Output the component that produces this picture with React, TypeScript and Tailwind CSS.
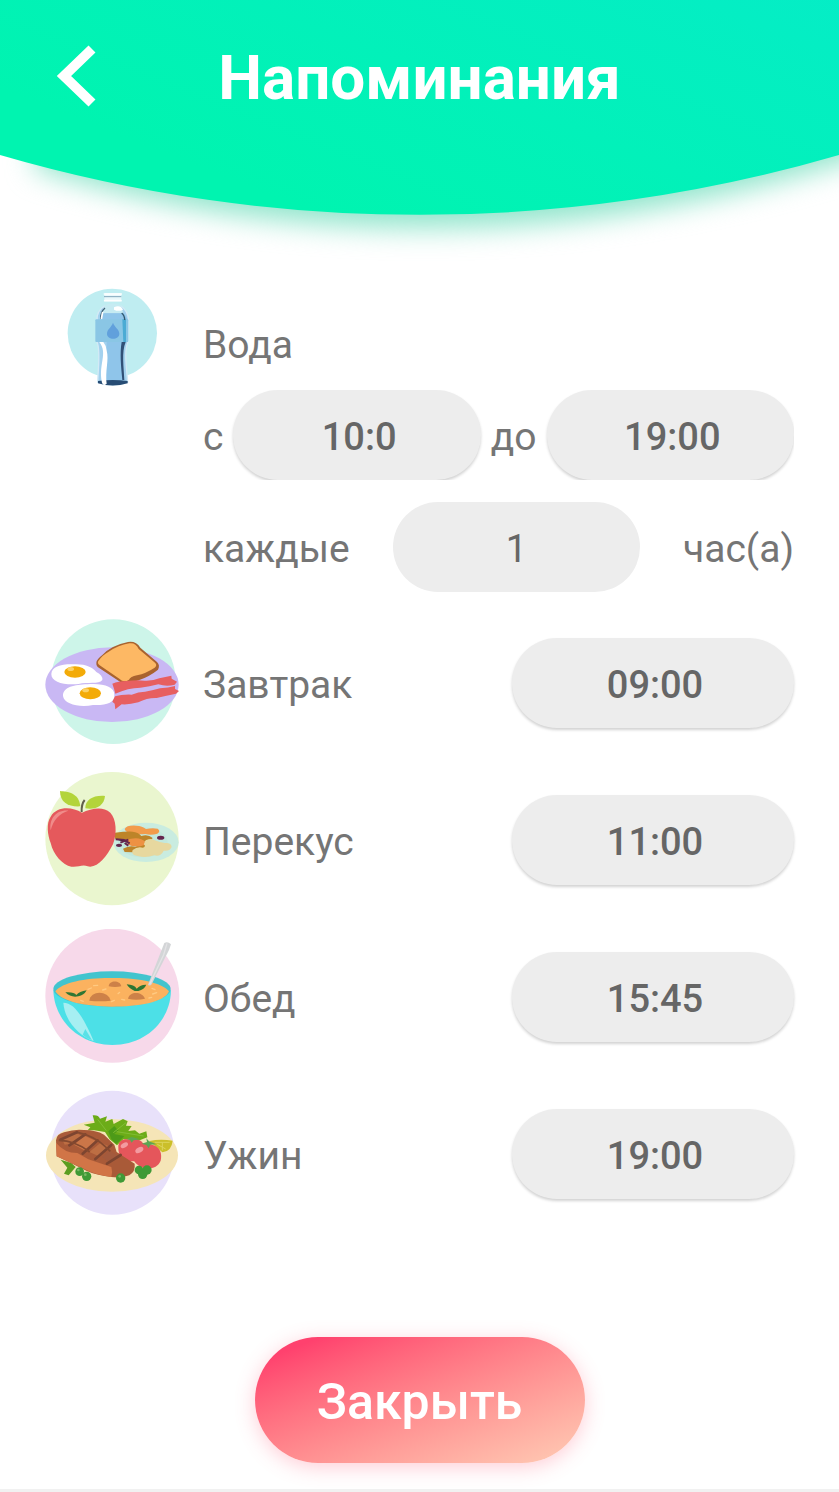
import React, { useState } from 'react'

interface Meal {
  id: string
  title: string
  time: string
  icon: React.ReactNode
}

const WaterIcon = () => (
  <svg viewBox="15 0 405 405" className="w-[135px] shrink-0 self-start" aria-hidden="true">
    <circle cx="217" cy="190" r="134" fill="#bfedf1" />
    <path
      d="M193 108 C174 120 170 137 171 152 L171 216 C182 240 175 286 173 337 Q218 354 263 337 C259 286 252 244 264 216 L266 152 C265 133 259 119 243 108 Z"
      fill="#a3d1ee"
      stroke="#d3eaf6"
      strokeWidth="4"
    />
    <path d="M193 106 Q218 95 243 106 L250 130 L186 130 Z" fill="#c6ebf2" />
    <path d="M184 130 L252 130 L264 150 L264 216 L252 216 C240 244 246 298 249 332 L200 332 L200 216 L171 216 L171 150 L184 148 Z" fill="#8fc5ea" />
    <rect x="166" y="148" width="99" height="68" rx="3" fill="#8ac6e5" />
    <path d="M247 148 H258 V216 H250 Z" fill="#4cabd4" />
    <rect x="193" y="70" width="51" height="24" rx="4" fill="#e9f8fb" />
    <path d="M193 72 H244 M194 92 H243" stroke="#fff" strokeWidth="5" strokeLinecap="round" />
    <path d="M192 80 H244" stroke="#81a6bb" strokeWidth="3" />
    <path d="M195 114 Q181 126 182 147" fill="none" stroke="#426174" strokeWidth="4" />
    <path d="M188 126 L184 147" stroke="#fff" strokeWidth="5" />
    <path d="M222 112 Q240 103 249 119 Q236 126 222 119 Z" fill="#fff" />
    <path d="M245 129 Q254 136 254 150" fill="none" stroke="#31576e" strokeWidth="4" />
    <path d="M219 158 C214 172 201 178 201 191 C201 211 238 211 238 191 C238 178 224 172 219 158 Z" fill="#61a0dc" />
    <path d="M174 333 Q218 327 263 333 L263 340 Q218 353 174 340 Z" fill="#274c74" />
    <path d="M178 216 C205 252 174 282 186 338 Q190 351 200 341 C194 304 208 270 200 242 Q198 225 190 216 Z" fill="#fff" />
    <path d="M245 216 H257 C244 247 252 292 253 330 L247 330 C243 288 239 250 245 216 Z" fill="#315076" />
  </svg>
)

const BreakfastIcon = () => (
  <svg viewBox="30 30 405 405" className="w-[135px] shrink-0" aria-hidden="true">
    <circle cx="235" cy="230" r="187" fill="#cdf5e9" />
    <ellipse cx="231" cy="239" rx="200" ry="112" fill="#c9b8f4" />
    <path
      d="M184 173 Q184 164 202 150 Q229 121 279 111 Q303 107 316 128 L366 171 Q376 181 369 194 Q344 214 313 225 Q289 235 268 234 Q255 233 247 225 L188 186 Q183 181 184 173 Z"
      fill="#a9632f"
    />
    <path
      d="M190 168 Q201 151 221 140 Q250 121 283 115 Q302 112 311 132 L360 173 Q368 181 359 188 Q333 205 306 211 Q286 215 282 224 Q267 235 253 221 L194 181 Q186 175 190 168 Z"
      fill="#fdb864"
    />
    <path
      d="M49 207 C50 184 79 177 115 178 C151 176 171 186 184 201 Q204 211 202 225 C191 239 157 230 131 237 C88 241 48 232 49 207 Z"
      fill="#fff"
    />
    <path
      d="M84 273 C84 246 119 239 157 238 C203 234 239 245 238 269 C242 294 210 302 174 300 C134 309 87 297 84 273 Z"
      fill="#fff"
    />
    <ellipse cx="120" cy="201" rx="32" ry="17" fill="#f3ab08" />
    <ellipse cx="166" cy="265" rx="32" ry="18" fill="#f3ab08" />
    <ellipse cx="107" cy="192" rx="10" ry="6" fill="#fbd266" />
    <ellipse cx="152" cy="256" rx="10" ry="6" fill="#fbd266" />
    <path
      d="M232 236 Q250 228 275 228 Q306 224 329 227 Q355 228 373 220 Q391 216 409 212 L410 221 L426 230 L419 239 Q395 246 370 238 Q344 245 316 248 Q279 248 241 266 L237 251 Z"
      fill="#e75f60"
    />
    <path
      d="M232 290 L240 274 Q260 268 290 269 Q310 260 330 260 Q357 255 375 250 Q400 249 420 243 L420 252 L432 258 L423 266 Q393 272 365 279 Q337 278 310 292 Q281 300 260 298 L241 313 L239 296 Z"
      fill="#e75f60"
    />
  </svg>
)

const SnackIcon = () => (
  <svg viewBox="30 36 405 405" className="w-[135px] shrink-0" aria-hidden="true">
    <circle cx="231" cy="236" r="200" fill="#eaf6cf" />
    <ellipse cx="333" cy="247" rx="98" ry="59" fill="#c9ece0" />
    <ellipse cx="323" cy="247" rx="75" ry="45" fill="#c2e8dd" />
    <path d="M269 207 Q275 195 304 197 Q322 198 333 207 Q352 203 368 206 Q378 214 367 221 Q348 227 331 222 Q306 224 292 220 Q272 219 269 207 Z" fill="#f29b4b" />
    <path d="M240 218 Q272 214 293 215 Q309 216 319 228 Q339 221 353 234 Q345 249 321 242 Q305 248 281 241 L240 236 Z" fill="#bd8429" />
    <path d="M264 266 Q282 255 301 260 Q320 251 336 257 L330 268 Q308 267 293 277 L269 276 Z" fill="#bd8429" />
    <path d="M271 241 Q302 230 319 238 Q340 246 326 256 Q304 264 280 254 Z" fill="#ed9143" />
    <path d="M242 238 L267 240 L284 250 M256 248 L280 239 M269 249 L280 257" stroke="#64264e" strokeWidth="6" />
    <ellipse cx="252" cy="256" rx="9" ry="5" fill="#64264e" />
    <ellipse cx="377" cy="233" rx="11" ry="6" fill="#64264e" />
    <path d="M332 241 Q349 234 357 240 Q376 247 389 249 Q409 247 410 261 Q403 275 386 272 Q377 291 358 286 Q332 295 308 288 Q286 285 293 270 Q307 259 323 263 Q334 260 327 251 Z" fill="#e7d89f" />
    <path
      d="M141 158 C109 139 65 139 47 170 C33 190 38 225 47 249 C55 285 83 315 109 320 C128 323 142 312 158 319 C187 326 214 292 234 253 C247 219 244 177 226 158 C203 137 168 146 141 158 Z"
      fill="#e5595c"
    />
    <path d="M47 211 C42 178 62 149 100 152 C73 160 55 180 47 211 Z" fill="#f08c8a" />
    <path d="M75 93 C98 95 132 98 136 139 C101 141 75 128 75 93 Z" fill="#b3d43a" />
    <path d="M210 108 C175 105 150 120 151 145 C181 150 207 139 210 108 Z" fill="#b3d43a" />
    <path d="M140 156 Q139 132 149 120" fill="none" stroke="#61604b" strokeWidth="6" />
  </svg>
)

const LunchIcon = () => (
  <svg viewBox="30 42 405 405" className="w-[135px] shrink-0" aria-hidden="true">
    <circle cx="232" cy="242" r="201" fill="#f7d9ea" />
    <path d="M55 226 C58 320 137 390 232 390 C330 390 406 320 408 226 Z" fill="#4ce0e7" />
    <ellipse cx="231" cy="222" rx="176" ry="53" fill="#42c4ce" />
    <path d="M61 229 C81 202 155 188 231 189 C312 188 381 203 402 229 C389 263 308 275 231 275 C153 274 82 262 61 229 Z" fill="#fbb25f" />
    <path d="M85 263 C117 263 143 302 176 378 C133 364 89 318 85 263 Z" fill="#a6eff2" />
    <path d="M143 359 Q154 370 171 376 L151 342 Z" fill="#5ae1e7" />
    <path d="M163 257 C166 225 220 225 227 257 Q195 261 163 257 Z" fill="#cd8148" />
    <path d="M221 214 C222 195 256 195 259 214 Q240 218 221 214 Z" fill="#cd8148" />
    <path d="M279 251 C283 228 322 228 330 251 Q303 257 279 251 Z" fill="#cd8148" />
    <path d="M91 232 Q117 230 124 240 Q133 229 155 226 Q147 241 130 244 Q108 249 91 232 Z" fill="#2f7633" />
    <path d="M275 208 Q298 209 305 221 Q317 208 334 209 Q328 223 310 228 L299 228 Q282 220 275 208 Z" fill="#2f7633" />
    <g stroke="#ffca82" strokeWidth="4" strokeLinecap="round">
      <path d="M159 223 L169 219 M176 212 L188 211 M203 225 L213 222 M229 260 L238 256 M249 236 L254 232" />
      <path d="M260 253 L269 255 M351 220 L360 224 M342 249 L350 247 M137 256 L145 259 M353 237 L365 233" />
    </g>
    <path d="M388 84 Q398 78 408 88 L402 105 L350 208 Q344 215 339 209 Z" fill="#d3d5d7" />
    <path d="M396 85 L386 119 L344 208" fill="none" stroke="#e3e3e5" strokeWidth="4" />
  </svg>
)

const DinnerIcon = () => (
  <svg viewBox="30 18 405 405" className="w-[135px] shrink-0" aria-hidden="true">
    <circle cx="232" cy="218" r="186" fill="#e8e1fa" />
    <ellipse cx="231" cy="226" rx="198" ry="109" fill="#f5e5b7" />
    <path d="M343 183 Q375 176 413 182 Q410 214 382 217 Z" fill="#cbbf2a" />
    <path d="M359 187 L404 187 M382 188 L382 211 M367 193 L392 207" stroke="#ddd55d" strokeWidth="3" />
    <path
      d="M146 134 L179 128 L173 106 Q190 104 195 116 L216 109 L211 125 L232 117 L236 132 L264 117 L278 124 L273 137 L290 138 L280 153 L300 151 L313 161 L334 154 L337 172 L314 181 L265 178 L246 196 L224 178 L210 156 L178 151 L158 151 L166 142 Z"
      fill="#6cac18"
    />
    <path d="M220 154 L238 138 L250 152 L237 162 L268 168 L244 192 L229 178 Z" fill="#4d9a18" />
    <path d="M188 118 L214 152 M235 158 L273 128 M245 155 L326 168" stroke="#82bd35" strokeWidth="3" />
    <path d="M77 239 L109 249 L122 261 L101 286 L87 281 L97 263 Z" fill="#5b9d20" />
    <path d="M250 202 C249 180 269 174 289 180 C319 172 333 192 330 218 C318 247 281 252 259 232 Q249 221 250 202 Z" fill="#e5565b" />
    <path d="M294 224 C298 193 329 184 350 194 C376 198 382 222 377 242 C366 270 325 273 304 251 Q292 240 294 224 Z" fill="#e5565b" />
    <ellipse cx="268" cy="196" rx="12" ry="7" fill="#f39aa0" transform="rotate(-30 268 196)" />
    <ellipse cx="313" cy="210" rx="13" ry="8" fill="#f39aa0" transform="rotate(-30 313 210)" />
    <path d="M275 177 L290 171 L315 178 L296 181 L290 188 L285 180 Z" fill="#5ca553" />
    <path d="M320 191 L336 186 L334 175 L342 184 L365 193 L346 194 L341 205 L334 195 Z" fill="#5ca553" />
    <path d="M63 181 Q65 162 87 157 Q120 146 147 150 Q183 150 207 164 L238 194 L245 216 L299 251 Q302 274 283 286 Q261 295 229 291 Q188 287 157 274 L103 247 L65 229 Z" fill="#a95a38" />
    <path d="M63 188 Q88 219 127 219 L160 238 L229 261 Q234 277 229 291 Q184 286 148 267 L65 229 Z" fill="#d17547" />
    <path d="M82 179 L105 162 Q129 158 139 167 L115 189 L89 194 Z" fill="#bd6e43" />
    <path d="M117 194 L149 167 L183 183 L148 211 Z" fill="#cb7648" />
    <path d="M163 216 L197 188 L225 200 L190 228 Z" fill="#bd6e43" />
    <path d="M201 231 L223 210 L250 229 L225 250 Z" fill="#a35a3d" />
    <path d="M76 179 L126 157 M103 196 L151 163 M143 221 L188 181 M181 237 L229 195 M216 251 L257 225" stroke="#7d4530" strokeWidth="8" strokeLinecap="round" />
    <path d="M71 181 Q120 181 164 216 M128 157 Q180 169 211 200 L226 214" fill="none" stroke="#84492f" strokeWidth="5" />
    <g fill="#3f9a36">
      <circle cx="134" cy="275" r="13" />
      <circle cx="155" cy="289" r="14" />
      <circle cx="257" cy="294" r="14" />
      <circle cx="312" cy="270" r="13" />
      <circle cx="336" cy="270" r="14" />
      <circle cx="323" cy="283" r="14" />
    </g>
    <g fill="#78b866">
      <circle cx="130" cy="270" r="4" />
      <circle cx="151" cy="284" r="4" />
      <circle cx="254" cy="289" r="4" />
    </g>
  </svg>
)

const meals: Meal[] = [
  { id: 'breakfast', title: 'Завтрак', time: '09:00', icon: <BreakfastIcon /> },
  { id: 'snack', title: 'Перекус', time: '11:00', icon: <SnackIcon /> },
  { id: 'lunch', title: 'Обед', time: '15:45', icon: <LunchIcon /> },
  { id: 'dinner', title: 'Ужин', time: '19:00', icon: <DinnerIcon /> },
]

interface TimeButtonProps {
  id: string
  time: string
  className: string
}

const TimeButton: React.FC<TimeButtonProps> = ({ id, time, className }) => (
  <button
    id={id}
    type="button"
    className={`h-[90px] rounded-full bg-[#ededed] pt-1 pl-1 text-center text-[38px] font-medium text-[#666666] shadow-[0_2px_3px_rgba(0,0,0,0.18)] ${className}`}
  >
    {time}
  </button>
)

// Curved header background with a soft glow under the arc
const HeaderCurve = () => (
  <svg
    viewBox="0 0 839 215"
    preserveAspectRatio="none"
    className="absolute inset-0 h-full w-full overflow-visible"
    aria-hidden="true"
  >
    <defs>
      <linearGradient id="headerFill" gradientUnits="userSpaceOnUse" x1="330" y1="220" x2="520" y2="-260">
        <stop offset="0" stopColor="#00f4b0" />
        <stop offset="1" stopColor="#06ebcd" />
      </linearGradient>
      <filter id="headerGlow" x="-10%" y="-20%" width="120%" height="150%" colorInterpolationFilters="sRGB">
        <feGaussianBlur stdDeviation="14" />
      </filter>
    </defs>
    <path d="M35 0 H880 V150 Q650 228 430 228 Q220 228 35 168 Z" fill="#8fe5cb" filter="url(#headerGlow)" />
    <path d="M0 0 H839 V155 A1500 1500 0 0 1 0 155 Z" fill="url(#headerFill)" />
  </svg>
)

const App: React.FC = () => {
  const [interval, setInterval] = useState('1')

  return (
    <div className="flex min-h-screen flex-col overflow-x-hidden bg-white font-['Roboto',sans-serif] text-[39px] leading-[50px] text-[#757575]">
      <header className="relative h-[215px]">
        <HeaderCurve />
        <div className="relative grid grid-cols-[100px_1fr_100px] items-center px-[45px] pt-[34px] text-white">
          <button type="button" aria-label="Назад" className="w-[64px]">
            <svg viewBox="0 0 64 80" className="w-[64px]" fill="none" stroke="currentColor" strokeWidth="10">
              <path d="M47 13 L19 40 L47 67" />
            </svg>
          </button>
          <h1 className="pt-1 text-center text-[62px] leading-[80px] font-bold">Напоминания</h1>
        </div>
      </header>

      <main className="flex flex-1 flex-col px-[45px] pt-[55px]">
        <section className="flex gap-[23px]">
          <WaterIcon />
          <div className="flex min-w-0 flex-1 flex-col pt-[50px]">
            <h2>Вода</h2>
            <div className="mt-[20px] flex h-[90px] items-center gap-[10px] overflow-hidden">
              <label htmlFor="water-from" className="pt-1">
                с
              </label>
              <TimeButton id="water-from" time="10:0" className="min-w-0 flex-1" />
              <label htmlFor="water-to" className="pt-1">
                до
              </label>
              <TimeButton id="water-to" time="19:00" className="min-w-0 flex-1" />
            </div>
            <div className="mt-[22px] flex items-center justify-between">
              <label htmlFor="water-interval" className="pt-1">
                каждые
              </label>
              <input
                id="water-interval"
                type="text"
                inputMode="numeric"
                value={interval}
                onChange={(e) => setInterval(e.target.value)}
                className="h-[90px] w-[247px] rounded-full bg-[#ededed] pt-1 text-center text-[38px] text-[#666666] outline-none"
              />
              <span className="pt-1">час(а)</span>
            </div>
          </div>
        </section>

        <ul className="mt-[23px] flex flex-col gap-[22px]">
          {meals.map((meal) => (
            <li key={meal.id} className="flex items-center gap-[23px]">
              {meal.icon}
              <label htmlFor={meal.id} className="flex-1 pt-1">
                {meal.title}
              </label>
              <TimeButton id={meal.id} time={meal.time} className="w-[282px]" />
            </li>
          ))}
        </ul>

        <button
          type="button"
          className="mt-[116px] mb-[26px] h-[126px] w-[330px] self-center rounded-full bg-linear-to-br from-[#ff416e] from-10% to-[#ffccb5] pt-1 text-[50px] font-medium text-white shadow-[0_4px_20px_rgba(255,90,120,0.3)]"
        >
          Закрыть
        </button>
      </main>
      <footer className="h-[3px] bg-[#f1f1f1]" />
    </div>
  )
}

export default App
